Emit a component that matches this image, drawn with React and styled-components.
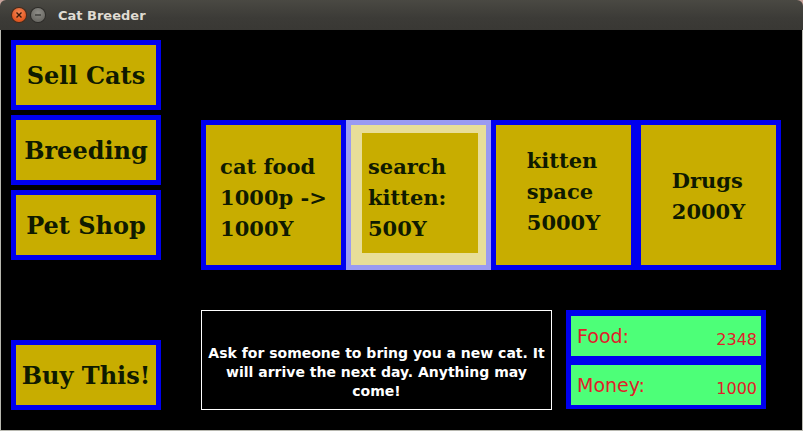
import React from 'react';
import styled, { createGlobalStyle, css } from 'styled-components';

const GlobalStyle = createGlobalStyle`
  html, body {
    margin: 0;
    padding: 0;
    background: #c9a49c;
    overflow: hidden;
  }
  * {
    box-sizing: border-box;
  }
`;

const BLUE = '#0000ee';
const GOLD = '#c8ad00';
const INK = '#0f1a00';

const shopItems = [
  { id: 'food', lines: ['cat food', '1000p ->', '1000Y'], shift: 5 },
  { id: 'search', lines: ['search', 'kitten:', '500Y'], shift: 9 },
  { id: 'space', lines: ['kitten', 'space', '5000Y'], shift: -8 },
  { id: 'drugs', lines: ['Drugs', '2000Y'], shift: 2 },
];

const SELECTED = 'search';

function App() {
  return (
    <>
      <GlobalStyle />
      <Window>
        <TitleBar>
          <WinButton $kind="close">
            <svg width="8" height="8" viewBox="0 0 8 8">
              <path d="M1.5 1.5 L6.5 6.5 M6.5 1.5 L1.5 6.5" stroke="#3a1a0a" strokeWidth="1.4" />
            </svg>
          </WinButton>
          <WinButton $kind="min">
            <svg width="8" height="8" viewBox="0 0 8 8">
              <path d="M1 4 L7 4" stroke="#3b3b38" strokeWidth="1.4" />
            </svg>
          </WinButton>
          <Title>Cat Breeder</Title>
        </TitleBar>

        <Content>
          <LeftColumn>
            <ButtonStack>
              <SideButton>Sell Cats</SideButton>
              <SideButton>Breeding</SideButton>
              <SideButton>Pet Shop</SideButton>
            </ButtonStack>
            <SideButton>Buy This!</SideButton>
          </LeftColumn>

          <Main>
            <ShopRow>
              {shopItems.map((item) => {
                const sel = item.id === SELECTED;
                return (
                  <ShopCell key={item.id} $selected={sel}>
                    <CellFace $selected={sel} $shift={item.shift}>
                      <CellText>
                        {item.lines.map((l) => (
                          <div key={l}>{l}</div>
                        ))}
                      </CellText>
                    </CellFace>
                  </ShopCell>
                );
              })}
            </ShopRow>

            <BottomRow>
              <InfoBox>
                Ask for someone to bring you a new cat. It
                <br />
                will arrive the next day. Anything may
                <br />
                come!
              </InfoBox>
              <StatusPanel>
                <StatRow>
                  <StatLabel>Food:</StatLabel>
                  <StatValue>2348</StatValue>
                </StatRow>
                <StatRow>
                  <StatLabel>Money:</StatLabel>
                  <StatValue>1000</StatValue>
                </StatRow>
              </StatusPanel>
            </BottomRow>
          </Main>
        </Content>
      </Window>
    </>
  );
}

export default App;

const Window = styled.div`
  width: 803px;
  height: 431px;
  display: flex;
  flex-direction: column;
`;

const TitleBar = styled.div`
  height: 30px;
  flex-shrink: 0;
  display: flex;
  align-items: center;
  padding-left: 12px;
  gap: 5px;
  background: linear-gradient(#4a4943, #3c3b37 60%, #393834);
  border-radius: 6px 6px 0 0;
`;

const WinButton = styled.div`
  width: 14px;
  height: 14px;
  border-radius: 50%;
  display: flex;
  align-items: center;
  justify-content: center;
  ${(p) =>
    p.$kind === 'close'
      ? css`
          background: radial-gradient(circle at 50% 35%, #f58a5a, #e2561f 70%);
          box-shadow: 0 0 0 1px #4a2a18;
        `
      : css`
          background: radial-gradient(circle at 50% 35%, #8e8d88, #6c6b66 70%);
          box-shadow: 0 0 0 1px #2d2c29;
        `}
`;

const Title = styled.span`
  margin-left: 8px;
  font-family: 'DejaVu Sans', sans-serif;
  font-weight: bold;
  font-size: 13px;
  color: #dfdbd2;
`;

const Content = styled.div`
  flex: 1;
  display: flex;
  background: #000;
  border: 1px solid #b8b8b0;
  border-top: none;
  padding: 10px 0 0 10px;
`;

const LeftColumn = styled.div`
  width: 150px;
  height: 370px;
  display: flex;
  flex-direction: column;
  justify-content: space-between;
`;

const ButtonStack = styled.div`
  display: flex;
  flex-direction: column;
  gap: 5px;
`;

const SideButton = styled.div`
  width: 150px;
  height: 70px;
  border: 5px solid ${BLUE};
  background: ${GOLD};
  display: flex;
  align-items: center;
  justify-content: center;
  font-family: 'DejaVu Serif', serif;
  font-weight: bold;
  font-size: 24px;
  color: ${INK};
`;

const Main = styled.div`
  margin-left: 40px;
  padding-top: 80px;
  display: flex;
  flex-direction: column;
`;

const ShopRow = styled.div`
  display: flex;
  width: 580px;
  height: 150px;
`;

const ShopCell = styled.div`
  width: 145px;
  height: 150px;
  border: 5px solid ${(p) => (p.$selected ? '#9a9af2' : BLUE)};
  background: ${(p) => (p.$selected ? '#e8de99' : GOLD)};
  padding: ${(p) => (p.$selected ? '8px 8px 12px 11px' : '0')};
  display: flex;
`;

const CellFace = styled.div`
  flex: 1;
  background: ${GOLD};
  display: flex;
  align-items: center;
  justify-content: ${(p) => (p.$selected ? 'flex-start' : 'center')};
  padding-left: ${(p) => (p.$selected ? '6px' : '0')};
  padding-top: ${(p) => Math.max(p.$shift, 0)}px;
  padding-bottom: ${(p) => Math.max(-p.$shift, 0)}px;
`;

const CellText = styled.div`
  font-family: 'DejaVu Serif', serif;
  font-weight: bold;
  font-size: 21px;
  line-height: 31px;
  color: ${INK};
  white-space: nowrap;
`;

const BottomRow = styled.div`
  margin-top: 40px;
  display: flex;
  gap: 14px;
`;

const InfoBox = styled.div`
  width: 351px;
  height: 100px;
  border: 1px solid #fff;
  color: #fff;
  font-family: 'DejaVu Sans', sans-serif;
  font-weight: bold;
  font-size: 14px;
  line-height: 19px;
  text-align: center;
  padding-top: 33px;
  white-space: nowrap;
`;

const StatusPanel = styled.div`
  width: 200px;
  height: 99px;
  background: ${BLUE};
  padding: 6px 5px 4px 5px;
  display: flex;
  flex-direction: column;
  gap: 9px;
`;

const StatRow = styled.div`
  height: 40px;
  background: #4dff78;
  display: flex;
  align-items: center;
  justify-content: space-between;
  padding: 0 4px 0 6px;
  color: #e0202a;
  font-family: 'DejaVu Sans', sans-serif;
`;

const StatLabel = styled.span`
  font-size: 19px;
`;

const StatValue = styled.span`
  font-size: 16px;
  margin-top: 7px;
`;
